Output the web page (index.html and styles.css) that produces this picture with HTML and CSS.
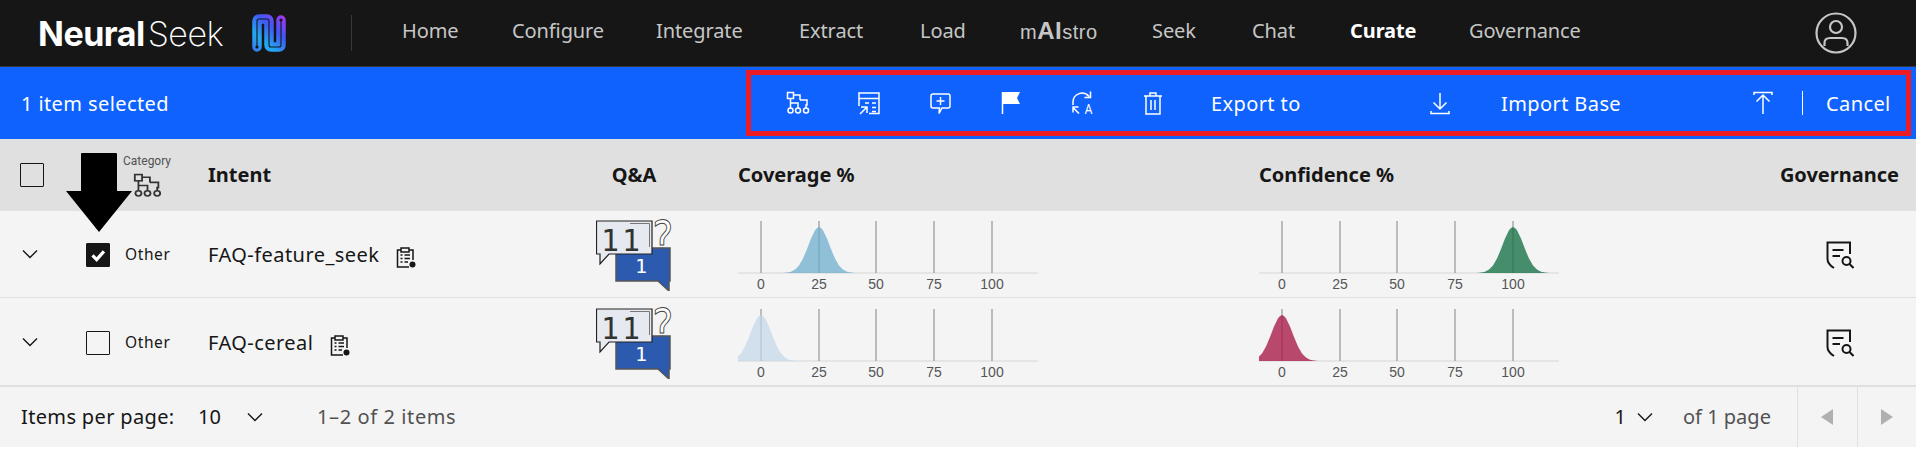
FILE: index.html
```html
<!DOCTYPE html>
<html lang="en">
<head>
<meta charset="utf-8">
<title>NeuralSeek - Curate</title>
<link rel="stylesheet" href="styles.css">
</head>
<body>
<svg class="defs" width="0" height="0" aria-hidden="true">
  <defs>
    <path id="curve" d="M-36 0 L-32 -.4 L-28 -1.3 L-24 -3.4 L-20 -7.5 L-16 -14.4 L-12 -23.9 L-8 -34.4 L-4 -42.8 Q-2 -45.5 0 -46 Q2 -45.5 4 -42.8 L8 -34.4 L12 -23.9 L16 -14.4 L20 -7.5 L24 -3.4 L28 -1.3 L32 -.4 L36 0 Z"/>
    <linearGradient id="logoGrad" gradientUnits="userSpaceOnUse" x1="0" y1="38" x2="34" y2="0">
      <stop offset="0" stop-color="#3a70f0"/>
      <stop offset=".3" stop-color="#22aaf0"/>
      <stop offset=".62" stop-color="#3f58f6"/>
      <stop offset="1" stop-color="#b52ff0"/>
    </linearGradient>
    <g id="ico-tree">
      <rect x="1.500" y="1.500" width="6" height="6"/>
      <path d="M4.500 7.500V17M4.500 12H12V17M7.500 4H14V9M14 9H21V14H20V17"/>
      <circle cx="4.500" cy="19.500" r="2.500"/>
      <circle cx="12" cy="19.500" r="2.500"/>
      <circle cx="20" cy="19.500" r="2.500"/>
    </g>
    <g id="ico-chev"><path d="M1 1.500L8 8.500L15 1.500"/></g>
    <g id="ico-clip">
      <path d="M5 3H1.500V20H13M17 13V3H13"/>
      <rect x="5" y="1" width="8" height="4"/>
      <path d="M4.500 8H6.500M8.500 8H14M4.500 11.500H6.500M8.500 11.500H14M4.500 15H6.500M8.500 15H12"/>
      <circle class="solid" cx="16.500" cy="17.500" r="3"/>
    </g>
    <g id="ico-gov">
      <path d="M24 13V1.500H1.500V18Q1.500 23 8 27"/>
      <path d="M6.500 9H17.500M6.500 15H14"/>
      <circle cx="20.500" cy="20" r="4"/>
      <path d="M23.500 23L27.500 27"/>
    </g>
    <g id="qa">
      <text class="qa-mark" transform="translate(56.500 37) scale(.85 1)">?</text>
      <path class="qa-blue" d="M20 31H74V64H73V74L62 64H20Z"/>
      <text class="qa-one" x="45" y="56">1</text>
      <path class="qa-light" d="M.5 4H56V37H13L4 47V37H.5Z"/>
      <path class="qa-inner" d="M34 6.500H53.500V30"/>
      <text class="qa-eleven" x="26" y="34">11</text>
    </g>
    <g id="axis">
      <path class="chart-axis" d="M0 58H300"/>
      <path class="chart-tick" d="M23 6V58M81 6V58M138 6V58M196 6V58M254 6V58"/>
      <text class="chart-label" x="23" y="74">0</text>
      <text class="chart-label" x="81" y="74">25</text>
      <text class="chart-label" x="138" y="74">50</text>
      <text class="chart-label" x="196" y="74">75</text>
      <text class="chart-label" x="254" y="74">100</text>
    </g>
  </defs>
</svg>

<header class="topbar">
  <div class="wordmark"><span class="word-strong">Neural</span><span class="word-light">Seek</span></div>
  <svg class="logo" viewBox="0 0 34 38">
    <path class="logo-ribbon" d="M5 33V7Q5 5 7 5H15Q17 5 17 7V31Q17 33 19 33H27Q29 33 29 31V6"/>
    <path class="logo-wire" d="M5 33V7Q5 5 7 5H15Q17 5 17 7V31Q17 33 19 33H27Q29 33 29 31V6"/>
    <circle class="logo-dot" cx="5" cy="33" r="1.600"/>
    <circle class="logo-dot" cx="29" cy="6" r="1.600"/>
  </svg>
  <div class="divider"></div>
  <nav class="nav">
    <a class="nav-link">Home</a>
    <a class="nav-link">Configure</a>
    <a class="nav-link">Integrate</a>
    <a class="nav-link">Extract</a>
    <a class="nav-link">Load</a>
    <a class="nav-link nav-mai">m<b>AI</b>stro</a>
    <a class="nav-link">Seek</a>
    <a class="nav-link">Chat</a>
    <a class="nav-link nav-active">Curate</a>
    <a class="nav-link">Governance</a>
  </nav>
  <svg class="avatar" viewBox="0 0 42 42">
    <circle cx="21" cy="21" r="19.500"/>
    <circle cx="21" cy="15" r="6"/>
    <path d="M9.500 34V31Q9.500 26 15 26H27Q32.500 26 32.500 31V34"/>
  </svg>
</header>

<section class="batchbar">
  <div class="batch-count">1 item selected</div>
  <div class="batch-actions">
    <span class="action-slot"><svg class="icon-24" viewBox="0 0 24 24"><use href="#ico-tree"/></svg></span>
    <span class="action-slot"><svg class="icon-24" viewBox="0 0 24 24"><path d="M12 22.500H22V2H2V15M2 7.500H22M8 12H12M15 12H19M15 16.500H19M15 20.500H19M3 23L9.500 16.500M4 16H10V22"/></svg></span>
    <span class="action-slot"><svg class="icon-24" viewBox="0 0 24 24"><path d="M5 3H20Q22 3 22 5V15Q22 17 20 17H14L11 22.500L11.500 17H5Q3 17 3 15V5Q3 3 5 3ZM12.500 6V14M8.500 10H16.500"/></svg></span>
    <span class="action-slot"><svg class="icon-24" viewBox="0 0 24 24"><path class="solid-white" d="M3.500 1H21L18 7L21 13H3.500Z"/><path d="M3.500 1V23"/></svg></span>
    <span class="action-slot"><svg class="icon-24" viewBox="0 0 24 24"><path d="M3 14V11A9 9 0 0 1 19 5.500M20.500 .5V6.500H14.500M9 22.500L3 16.500M3 21.500V16H8.500"/><text class="swap-a" transform="translate(18.500 23) scale(.85 1)">A</text></svg></span>
    <span class="action-slot"><svg class="icon-24" viewBox="0 0 24 24"><path d="M3 5H21M9 5V2H15V5M5 5V23H19V5M10 9V19M14 9V19"/></svg></span>
    <div class="batch-export">
      <span class="batch-text">Export to</span>
      <svg class="icon-24" viewBox="0 0 24 24"><path d="M12 2V18M5.500 11.500L12 18L18.500 11.500M3 20V22.500H21V20"/></svg>
    </div>
    <div class="batch-import">
      <span class="batch-text">Import Base</span>
      <svg class="icon-24" viewBox="0 0 24 24"><path d="M12 4V23M5.500 10.500L12 4L18.500 10.500M3 4V1.500H21V4"/></svg>
    </div>
    <div class="batch-sep"></div>
    <span class="batch-text batch-cancel">Cancel</span>
  </div>
</section>

<main class="table">
  <svg class="arrow" viewBox="0 0 66 79"><path d="M16 0H50Q51 0 51 1V38H66L33 79L0 38H15V1Q15 0 16 0Z"/></svg>

  <div class="row row-head">
    <div class="cell-lead"><span class="checkbox"></span></div>
    <div class="cell-cat">
      <span class="cat-title">Category</span>
      <svg class="icon-tree-dark" viewBox="0 0 24 23" preserveAspectRatio="none"><use href="#ico-tree"/></svg>
    </div>
    <div class="head-text">Intent</div>
    <div class="head-text head-center">Q&amp;A</div>
    <div></div>
    <div class="head-text">Coverage %</div>
    <div class="head-text">Confidence %</div>
    <div class="head-text head-end">Governance</div>
  </div>

  <div class="row row-body row-first">
    <div class="cell-chev"><svg class="chev" viewBox="0 0 16 10"><use href="#ico-chev"/></svg></div>
    <div class="cell-check"><span class="checkbox checkbox-on"><svg viewBox="0 0 24 24"><path d="M6 12.500L10.500 17L18.500 8"/></svg></span></div>
    <div class="cell-other">Other</div>
    <div class="cell-intent"><span class="intent-name">FAQ-feature_seek</span><svg class="clip" viewBox="0 0 20 21"><use href="#ico-clip"/></svg></div>
    <div class="cell-qa"><svg class="qa-svg" viewBox="0 0 76 74"><use href="#qa"/></svg></div>
    <div></div>
    <div><svg class="chart" viewBox="0 0 300 78"><use href="#axis"/><use href="#curve" class="curve-blue" x="81" y="58"/></svg></div>
    <div><svg class="chart" viewBox="0 0 300 78"><use href="#axis"/><use href="#curve" class="curve-green" x="254" y="58"/></svg></div>
    <div class="cell-gov"><svg class="gov" viewBox="0 0 28 28"><use href="#ico-gov"/></svg></div>
  </div>

  <div class="row row-body row-last">
    <div class="cell-chev"><svg class="chev" viewBox="0 0 16 10"><use href="#ico-chev"/></svg></div>
    <div class="cell-check"><span class="checkbox"></span></div>
    <div class="cell-other">Other</div>
    <div class="cell-intent"><span class="intent-name">FAQ-cereal</span><svg class="clip" viewBox="0 0 20 21"><use href="#ico-clip"/></svg></div>
    <div class="cell-qa"><svg class="qa-svg" viewBox="0 0 76 74"><use href="#qa"/></svg></div>
    <div></div>
    <div><svg class="chart" viewBox="0 0 300 78"><use href="#axis"/><use href="#curve" class="curve-pale" x="23" y="58"/></svg></div>
    <div><svg class="chart" viewBox="0 0 300 78"><use href="#axis"/><use href="#curve" class="curve-red" x="23" y="58"/></svg></div>
    <div class="cell-gov"><svg class="gov" viewBox="0 0 28 28"><use href="#ico-gov"/></svg></div>
  </div>

  <footer class="pager">
    <span class="pager-label">Items per page:</span>
    <span class="pager-size">10</span>
    <svg class="chev" viewBox="0 0 16 10"><use href="#ico-chev"/></svg>
    <span class="pager-range">1–2 of 2 items</span>
    <span class="pager-page">1</span>
    <svg class="chev pager-chev" viewBox="0 0 16 10"><use href="#ico-chev"/></svg>
    <span class="pager-of">of 1 page</span>
    <span class="pager-btn"><i class="tri tri-left"></i></span>
    <span class="pager-btn"><i class="tri tri-right"></i></span>
  </footer>
</main>
</body>
</html>
```
FILE: styles.css
```css
* { box-sizing: border-box; }
html, body { margin: 0; padding: 0; background: #fff; }
body { width: 1916px; height: 475px; overflow: hidden; font-family: "Noto Sans", "Open Sans", sans-serif; color: #161616; font-size: 20px; }
.defs { position: absolute; }

/* top bar */
.topbar { height: 67px; background: #161616; border-bottom: 1px solid #393939; display: flex; align-items: center; padding-left: 38px; }
.wordmark { width: 186px; white-space: nowrap; font-family: Inter, sans-serif; font-size: 34px; color: #fff; letter-spacing: -.5px; }
.word-strong { font-weight: 700; }
.word-light { font-weight: 200; margin-left: 3px; }
.logo { width: 34px; height: 38px; margin-left: 28px; flex: none; fill: none; }
.logo-ribbon { stroke: url(#logoGrad); stroke-width: 9.500; stroke-linecap: round; fill: none; }
.logo-wire { stroke: #161616; stroke-width: 1.100; fill: none; }
.logo-dot { fill: #161616; }
.divider { width: 1px; height: 36px; background: #393939; margin-left: 65px; flex: none; }
.nav { margin-left: 50px; margin-bottom: 5px; display: grid; grid-template-columns: 110px 144px 143px 121px 100px 132px 100px 98px 119px auto; }
.nav-link { color: #c6c6c6; font-size: 20px; letter-spacing: -.1px; white-space: nowrap; }
.nav-active { color: #fff; font-weight: 700; }
.nav-mai { font-family: "Liberation Sans", sans-serif; font-size: 20px; letter-spacing: .5px; margin-top: 4px; }
.nav-mai b { font-weight: 700; font-size: 24px; line-height: 20px; }
.avatar { width: 42px; height: 42px; margin-left: auto; margin-right: 59px; fill: none; stroke: #c6c6c6; stroke-width: 2.200; }

/* batch actions */
.batchbar { height: 72px; background: #0f62fe; display: flex; align-items: center; padding-left: 21px; color: #fff; }
.batch-count { font-size: 20px; letter-spacing: .4px; }
.batch-actions { margin-left: auto; margin-right: 5px; width: 1165px; height: 66px; border: 5px solid #ed1c24; display: flex; align-items: center; padding-left: 11px; }
.action-slot { width: 71px; display: flex; justify-content: center; flex: none; }
.icon-24 { width: 24px; height: 24px; fill: none; stroke: #fff; stroke-width: 1.500; flex: none; overflow: visible; }
.solid-white { fill: #fff; stroke: none; }
.swap-a { font-family: "Noto Sans", sans-serif; font-size: 14px; fill: #fff; stroke: none; text-anchor: middle; }
.batch-text { font-size: 20px; letter-spacing: .4px; white-space: nowrap; }
.batch-export { margin-left: 23px; width: 241px; display: flex; justify-content: space-between; align-items: center; flex: none; }
.batch-import { margin-left: 49px; width: 274px; display: flex; justify-content: space-between; align-items: center; flex: none; }
.batch-sep { width: 1px; height: 24px; background: #fff; margin-left: 27px; flex: none; }
.batch-cancel { margin-left: 23px; }

/* table */
.table { position: relative; }
.arrow { position: absolute; left: 66px; top: 14px; width: 66px; height: 79px; fill: #000; z-index: 2; }
.row { display: grid; grid-template-columns: 76px 48px 84px 382px 88px 60px 521px 522px 118px; align-items: center; }
.row-head { height: 72px; background: #e0e0e0; }
.row-body { background: #f4f4f4; }
.row-first { height: 87px; border-bottom: 1px solid #e0e0e0; }
.row-last { height: 89px; padding-top: 1px; border-bottom: 2px solid #e0e0e0; }
.cell-lead { padding-left: 20px; }
.cell-cat { grid-column: 2 / span 2; display: flex; flex-direction: column; align-items: center; padding-left: 10px; }
.cat-title { font-family: Roboto, sans-serif; font-size: 13px; line-height: 14px; color: #525252; transform: scaleX(.92); }
.icon-tree-dark { width: 29px; height: 24px; margin-top: 5px; fill: none; stroke: #333; stroke-width: 1.500; }
.head-text { font-weight: 700; font-size: 20px; white-space: nowrap; color: #161616; margin-bottom: 2px; }
.head-center { justify-self: center; }
.head-end { justify-self: end; }
.checkbox { display: block; width: 24px; height: 24px; border: 1px solid #161616; border-radius: 1px; background: transparent; }
.checkbox-on { background: #161616; }
.checkbox-on svg { display: block; width: 22px; height: 22px; fill: none; stroke: #fff; stroke-width: 3.500; }
.cell-chev { padding-left: 22px; display: flex; }
.chev { width: 16px; height: 10px; fill: none; stroke: #161616; stroke-width: 1.400; flex: none; }
.cell-check { margin-top: 2px; padding-left: 10px; }
.cell-other { font-size: 15.500px; letter-spacing: .6px; padding-left: 1px; }
.cell-intent { display: flex; align-items: center; gap: 17px; margin-top: 6px; }
.intent-name { letter-spacing: .45px; font-size: 20px; margin-bottom: 5px; }
.clip { width: 20px; height: 21px; fill: none; stroke: #161616; stroke-width: 1.500; flex: none; }
.solid { fill: #161616; stroke: none; }
.cell-qa { display: flex; justify-content: center; }
.qa-svg { width: 76px; height: 74px; display: block; }
.qa-mark { font-family: "DejaVu Sans", sans-serif; font-size: 46px; fill: #fff; stroke: #444; stroke-width: 1; }
.qa-blue { fill: #2c5aaf; stroke: #555; stroke-width: 1.500; }
.qa-light { fill: #e6e9ef; stroke: #222; stroke-width: 1.200; }
.qa-inner { fill: none; stroke: #777; stroke-width: 1; }
.qa-eleven { font-family: "DejaVu Sans Mono", monospace; font-size: 30px; letter-spacing: 3px; fill: #333; text-anchor: middle; }
.qa-one { font-family: "DejaVu Sans Mono", monospace; font-size: 20px; fill: #fff; text-anchor: middle; }
.chart { width: 300px; height: 78px; display: block; }
.chart-axis { stroke: #d6d6d6; stroke-width: 1; fill: none; }
.chart-tick { stroke: #a8a8a8; stroke-width: 1.500; fill: none; }
.chart-label { font-family: "Liberation Sans", Arial, sans-serif; font-size: 14px; fill: #555; text-anchor: middle; }
.curve-blue { fill: #6aaccd; fill-opacity: .72; }
.curve-green { fill: #1a7349; fill-opacity: .8; }
.curve-pale { fill: #c3d7ea; fill-opacity: .7; }
.curve-red { fill: #a91d4a; fill-opacity: .8; }
.cell-gov { display: flex; justify-content: center; }
.gov { width: 28px; height: 28px; fill: none; stroke: #161616; stroke-width: 2; margin-top: 2px; }

/* pagination */
.pager { height: 60px; background: #f4f4f4; display: flex; align-items: center; padding-left: 21px; font-size: 20px; }
.pager-label { width: 177px; white-space: nowrap; letter-spacing: .35px; margin-bottom: 2px; }
.pager-size { width: 49px; margin-bottom: 2px; }
.pager-range { margin-left: 54px; color: #525252; white-space: nowrap; letter-spacing: .6px; margin-bottom: 2px; }
.pager-page { margin-left: auto; margin-bottom: 2px; }
.pager-chev { margin-left: 11px; }
.pager-of { margin-left: 30px; width: 114px; color: #525252; white-space: nowrap; margin-bottom: 2px; }
.pager-btn { width: 59.500px; height: 60px; border-left: 1px solid #e0e0e0; display: flex; align-items: center; justify-content: center; flex: none; }
.tri { display: block; width: 0; height: 0; border-top: 8.500px solid transparent; border-bottom: 8.500px solid transparent; }
.tri-left { border-right: 12px solid #b0b0b0; }
.tri-right { border-left: 12px solid #b0b0b0; }
```
